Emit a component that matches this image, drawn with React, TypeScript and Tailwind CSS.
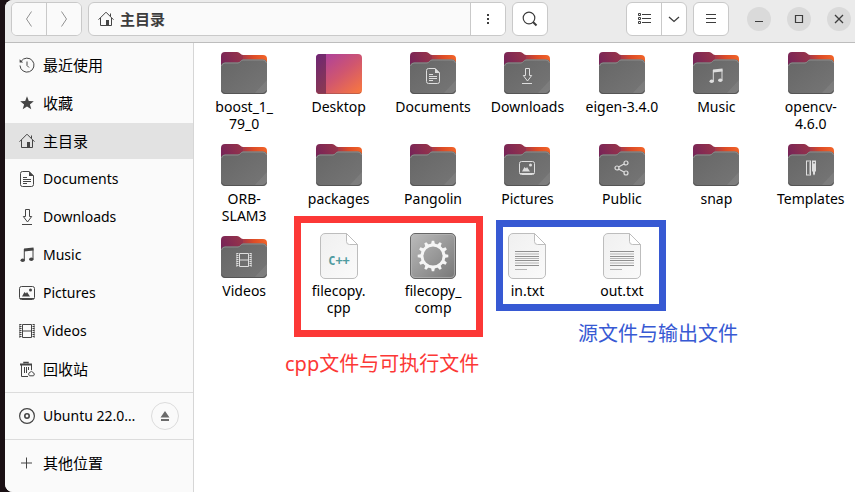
import type { ReactNode } from "react";

type GlyphName =
  | "recent"
  | "star"
  | "home"
  | "documents"
  | "downloads"
  | "music"
  | "pictures"
  | "videos"
  | "trash"
  | "disc"
  | "plus"
  | "share"
  | "templates";

const gear = Array.from({ length: 12 }, (_, i) => i * 30);

const glyphs: Record<GlyphName, ReactNode> = {
  recent: (
    <g fill="none" stroke="currentColor">
      <path d="M2.2 4.2A7 7 0 1 1 1 8.5" />
      <path d="M8 4.5v4l2 2" />
      <path d="M.6 2.2v3.3h3.6z" fill="currentColor" stroke="none" />
    </g>
  ),
  star: (
    <path
      fill="currentColor"
      d="M8 1.3l1.8 4.8 5 .2-3.9 3.1 1.4 4.9L8 11.5l-4.3 2.8 1.4-4.9-3.9-3.1 5-.2z"
    />
  ),
  home: (
    <g fill="none" stroke="currentColor">
      <path d="M.5 8.7L8 1.2l7.5 7.5M2.5 7v7.5h11V7M12.5 2.5v3" />
      <path d="M8 9h3v5.5H8z" fill="currentColor" stroke="none" />
    </g>
  ),
  documents: (
    <g fill="none" stroke="currentColor">
      <path d="M3.5.5H10L14.5 5v8.5a2 2 0 0 1-2 2h-9a2 2 0 0 1-2-2v-11a2 2 0 0 1 2-2z" />
      <path d="M10 0v5h5z" fill="currentColor" stroke="none" />
      <path d="M4 6.5h4M4 8.5h8M4 10.5h8M4 12.5h4" />
    </g>
  ),
  downloads: (
    <path fill="none" stroke="currentColor" d="M6.5.5h4v7h2.2L8.5 13 4.3 7.5h2.2zM3 15.500h10" />
  ),
  music: (
    <g fill="currentColor">
      <path d="M5 1.5L14.5.5v3L5 4.5z" />
      <path d="M4.800 2h1v11h-1zM13.500 1.500h1V12h-1z" />
      <ellipse cx="3.700" cy="13.200" rx="2.200" ry="1.800" />
      <ellipse cx="12.300" cy="12.200" rx="2.200" ry="1.800" />
    </g>
  ),
  pictures: (
    <g fill="none" stroke="currentColor">
      <rect x=".5" y="1.5" width="15" height="13" rx="2" />
      <path d="M1 13.5h14" />
      <path d="M3 11.500l2.500-4.500L7 8.500 8 7l3 4.500z" fill="currentColor" stroke="none" />
      <circle cx="11.5" cy="5" r="1.5" fill="currentColor" stroke="none" />
    </g>
  ),
  videos: (
    <g fill="none" stroke="currentColor">
      <path d="M3.5 1.5h9v13h-9zM3.5 8h9" />
      <path d="M1.5 1v14M14.5 1v14" strokeWidth="2" strokeDasharray="1 1" />
      <path d="M.8 1v14M15.2 1v14" strokeWidth=".7" />
    </g>
  ),
  trash: (
    <g fill="none" stroke="currentColor">
      <path d="M1 3.5h12" strokeWidth="2" />
      <path d="M5 2.5v-1h4v1" strokeWidth="1.500" />
      <path d="M2.5 4v11.5H9M12.5 4v5M5.5 6v6M7.5 6v6M9.5 6v3" />
      <path d="M10.5 14.8a2 2 0 0 1 .5-3.500l1.500-1 1.500 1.200a1.900 1.900 0 0 1 .5 3.300z" />
    </g>
  ),
  disc: (
    <g fill="none" stroke="currentColor">
      <circle cx="8" cy="8" r="7.4" strokeWidth="1.200" />
      <circle cx="8" cy="8" r="2.2" strokeWidth="1.600" />
    </g>
  ),
  plus: <path stroke="currentColor" d="M7.5 2.5v11M2 8h11" />,
  share: (
    <g fill="none" stroke="currentColor" strokeWidth="1.200">
      <path d="M4.500 7l5.500-3M4.500 9l5.500 3" />
      <circle cx="3" cy="8" r="2" />
      <circle cx="12" cy="3" r="2" />
      <circle cx="12" cy="13" r="2" />
    </g>
  ),
  templates: (
    <g fill="currentColor" fillRule="evenodd">
      <path d="M3 .500h5v15H3zM4 1.500v13h3v-1H6v-1h1v-1H6v-1h1v-1H6v-1h1v-1H6v-1h1v-1H6v-1h1v-1H6v-1h1v-1z" />
      <path d="M9 .500h4v10.500l-1 1v2l-1 1.500-1-1.500v-2l-1-1zM10.300 2v1.500h1.500V2z" />
    </g>
  ),
};

function Glyph({ name }: { name: GlyphName }) {
  return (
    <svg viewBox="0 0 16 16" className="size-4 shrink-0 text-[#454545]" aria-hidden="true">
      {glyphs[name]}
    </svg>
  );
}

function Folder({ glyph }: { glyph?: GlyphName }) {
  return (
    <svg viewBox="0 0 46 42" className="mb-1 h-[42px] w-[46px]" aria-hidden="true">
      <defs>
        <linearGradient id="folder-back" x1="0" y1="0.6" x2="1" y2="0.4">
          <stop offset="0" stopColor="#7b2757" />
          <stop offset="0.4" stopColor="#a5374a" />
          <stop offset="0.7" stopColor="#dc4b27" />
          <stop offset="1" stopColor="#ef6128" />
        </linearGradient>
        <linearGradient id="folder-tab" gradientUnits="userSpaceOnUse" x1="0" y1="10" x2="20" y2="0">
          <stop offset="0" stopColor="#762458" />
          <stop offset="1" stopColor="#98344a" />
        </linearGradient>
        <linearGradient id="folder-front" x1="0" y1="0" x2="1" y2="1">
          <stop offset="0" stopColor="#666" />
          <stop offset="1" stopColor="#767676" />
        </linearGradient>
      </defs>
      <path d="M10 3h32a4 4 0 0 1 4 4v20H10z" fill="url(#folder-back)" />
      <path d="M0 24V4a4 4 0 0 1 4-4h12c3 0 3.500 3 6 3v4l-6 17z" fill="url(#folder-tab)" />
      <path
        d="M0 14a4 4 0 0 1 4-3.500h13c2 0 3-3 5-3h20a4 4 0 0 1 4 4V38a4 4 0 0 1-4 4H4a4 4 0 0 1-4-4z"
        fill="url(#folder-front)"
      />
      <path d="M.5 14a4 4 0 0 1 3.500-3h13c2 0 3-3 5-3h20a4 4 0 0 1 3.500 3" fill="none" stroke="#8b8b8b" />
      <path d="M46 28v10a4 4 0 0 1-4 4H33z" fill="#fff" opacity=".07" />
      <path d="M.5 38.500a4 4 0 0 0 3.500 3h38a4 4 0 0 0 3.500-3" fill="none" stroke="#555" />
      {glyph && (
        <g transform="translate(15 16)" color="#dedede">
          {glyphs[glyph]}
        </g>
      )}
    </svg>
  );
}

function DesktopIcon() {
  return (
    <svg viewBox="0 0 46 40" className="mb-1 h-10 w-[46px]" aria-hidden="true">
      <defs>
        <linearGradient id="desk" x1="0.1" y1="0" x2="1" y2="1">
          <stop offset="0" stopColor="#aa3fa0" />
          <stop offset="0.5" stopColor="#d0566f" />
          <stop offset="1" stopColor="#fb7a3c" />
        </linearGradient>
        <linearGradient id="desk-side" x1="0" y1="0" x2="0.3" y2="1">
          <stop offset="0" stopColor="#6e2674" />
          <stop offset="1" stopColor="#883755" />
        </linearGradient>
      </defs>
      <rect width="46" height="40" rx="4" fill="url(#desk)" />
      <path d="M10 0H4a4 4 0 0 0-4 4v32a4 4 0 0 0 4 4h6z" fill="url(#desk-side)" />
      <path d="M1 38a4 4 0 0 0 3 1.500h38a4 4 0 0 0 3-1.500" fill="none" stroke="#8f4a4a" opacity=".5" />
    </svg>
  );
}

function Sheet({ children }: { children: ReactNode }) {
  return (
    <svg viewBox="0 0 38 46" className="mb-[3px] h-[46px] w-[38px]" aria-hidden="true">
      <defs>
        <linearGradient id="sheet" x1="0" y1="0" x2="1" y2="1">
          <stop offset="0" stopColor="#f0f0f0" />
          <stop offset="1" stopColor="#fafafa" />
        </linearGradient>
      </defs>
      <path
        d="M5 .5h21.500l11 11V41a4.500 4.500 0 0 1-4.500 4.500H5A4.500 4.500 0 0 1 .5 41V5A4.500 4.500 0 0 1 5 .5z"
        fill="url(#sheet)"
        stroke="#bdbdbd"
      />
      <path d="M26.500.5v8a3 3 0 0 0 3 3h8z" fill="#fff" stroke="#bdbdbd" />
      {children}
    </svg>
  );
}

function TextFile() {
  return (
    <Sheet>
      <path d="M7 18.500h24M7 23.500h24M7 27.500h24M7 32.500h24" stroke="#8f8f8f" />
      <path d="M7 21h24M7 25.500h24M7 30h24M7 36.500h12" stroke="#b4b4b4" />
    </Sheet>
  );
}

function CppFile() {
  return (
    <Sheet>
      <text
        x="19"
        y="32"
        textAnchor="middle"
        fill="#4f9ba0"
        className="font-['DejaVu_Sans_Mono',monospace] text-[12px] font-bold"
      >
        C++
      </text>
    </Sheet>
  );
}

function Executable() {
  return (
    <svg viewBox="0 0 46 46" className="mb-[3px] size-[46px]" aria-hidden="true">
      <defs>
        <linearGradient id="exec" x1="0" y1="0" x2="1" y2="1">
          <stop offset="0" stopColor="#bcbcbc" />
          <stop offset="1" stopColor="#777" />
        </linearGradient>
      </defs>
      <rect x=".5" y=".5" width="45" height="45" rx="4.500" fill="url(#exec)" stroke="#666" />
      <rect x="1.500" y="1.500" width="43" height="43" rx="3.500" fill="none" stroke="#bbb" opacity=".6" />
      <circle cx="23" cy="23" r="11" fill="none" stroke="#f5f5f5" strokeWidth="2.800" />
      {gear.map((a) => (
        <path key={a} d="M20.900 12l.9-4.300h2.400l.9 4.300z" fill="#f5f5f5" transform={`rotate(${a} 23 23)`} />
      ))}
    </svg>
  );
}

const places: { label: string; glyph: GlyphName; cjk?: boolean; active?: boolean }[] = [
  { label: "最近使用", glyph: "recent", cjk: true },
  { label: "收藏", glyph: "star", cjk: true },
  { label: "主目录", glyph: "home", cjk: true, active: true },
  { label: "Documents", glyph: "documents" },
  { label: "Downloads", glyph: "downloads" },
  { label: "Music", glyph: "music" },
  { label: "Pictures", glyph: "pictures" },
  { label: "Videos", glyph: "videos" },
  { label: "回收站", glyph: "trash", cjk: true },
];

const files: { label: string; icon: ReactNode }[] = [
  { label: "boost_1_\n79_0", icon: <Folder /> },
  { label: "Desktop", icon: <DesktopIcon /> },
  { label: "Documents", icon: <Folder glyph="documents" /> },
  { label: "Downloads", icon: <Folder glyph="downloads" /> },
  { label: "eigen-3.4.0", icon: <Folder /> },
  { label: "Music", icon: <Folder glyph="music" /> },
  { label: "opencv-\n4.6.0", icon: <Folder /> },
  { label: "ORB-\nSLAM3", icon: <Folder /> },
  { label: "packages", icon: <Folder /> },
  { label: "Pangolin", icon: <Folder /> },
  { label: "Pictures", icon: <Folder glyph="pictures" /> },
  { label: "Public", icon: <Folder glyph="share" /> },
  { label: "snap", icon: <Folder /> },
  { label: "Templates", icon: <Folder glyph="templates" /> },
  { label: "Videos", icon: <Folder glyph="videos" /> },
  { label: "filecopy.\ncpp", icon: <CppFile /> },
  { label: "filecopy_\ncomp", icon: <Executable /> },
  { label: "in.txt", icon: <TextFile /> },
  { label: "out.txt", icon: <TextFile /> },
];

const box = "flex h-[34px] shrink-0 overflow-hidden rounded-md border border-[#c9c9c9] bg-white";
const cell = "flex items-center justify-center";

function Header() {
  return (
    <header className="flex items-start border-b border-[#bdbdbd] bg-[#ebebeb] pt-0.5 pr-1 pb-1.5 pl-1.5 text-[#3d3d3d]">
      <div className={box}>
        <button aria-label="后退" className={`${cell} w-[35px] border-r border-[#c9c9c9] bg-[#fafafa]`}>
          <svg viewBox="0 0 16 16" className="size-4" fill="none" stroke="#929292">
            <path d="M10.500.500L5.500 8l5 7.500" />
          </svg>
        </button>
        <button aria-label="前进" className={`${cell} w-[34px] bg-[#fafafa]`}>
          <svg viewBox="0 0 16 16" className="size-4" fill="none" stroke="#929292">
            <path d="M5.500.500l5 7.500-5 7.500" />
          </svg>
        </button>
      </div>
      <div className="ml-1.5 flex h-[34px] min-w-0 flex-1 overflow-hidden rounded-md border border-[#c9c9c9] bg-[#fafafa]">
        <button className="flex flex-1 items-center gap-1.5 pl-[9px] text-[15px] font-bold">
          <Glyph name="home" />
          主目录
        </button>
        <button aria-label="菜单" className={`${cell} w-[35px] border-l border-[#c9c9c9] bg-white`}>
          <svg viewBox="0 0 16 16" className="size-4" fill="currentColor">
            <path d="M7 3h2v2H7zM7 7h2v2H7zM7 11h2v2H7z" />
          </svg>
        </button>
      </div>
      <div className={`${box} mr-[78px] ml-1.5`}>
        <button aria-label="搜索" className={`${cell} w-[34px]`}>
          <svg viewBox="0 0 16 16" className="size-4" fill="none" stroke="currentColor">
            <circle cx="7" cy="7" r="5.800" strokeWidth="1.200" />
            <path d="M11 11l3.500 3.500" strokeWidth="2" />
          </svg>
        </button>
      </div>
      <div className={box}>
        <button aria-label="列表视图" className={`${cell} w-[34px]`}>
          <svg viewBox="0 0 16 16" className="size-4" fill="none" stroke="currentColor">
            <path d="M6 3.500h9M6 7.500h9M6 11.500h9" />
            <path d="M2.500 2.500h2v2h-2zM2.500 6.500h2v2h-2zM2.500 10.500h2v2h-2z" />
          </svg>
        </button>
        <button aria-label="视图选项" className={`${cell} w-[25px] border-l border-[#c9c9c9]`}>
          <svg viewBox="0 0 16 16" className="size-4" fill="none" stroke="currentColor">
            <path d="M3 6l5 4.500L13 6" strokeWidth="1.300" />
          </svg>
        </button>
      </div>
      <div className={`${box} ml-1.5`}>
        <button aria-label="主菜单" className={`${cell} w-[34px]`}>
          <svg viewBox="0 0 16 16" className="size-4" fill="none" stroke="currentColor">
            <path d="M3 3.500h10M3 7.500h10M3 11.500h10" />
          </svg>
        </button>
      </div>
      <div className="ml-[18px] flex h-[34px] items-center gap-4">
        <button aria-label="最小化" className={`${cell} size-6 rounded-full bg-[#dadada]`}>
          <svg viewBox="0 0 16 16" className="size-4" stroke="currentColor">
            <path d="M4 10.500h8" />
          </svg>
        </button>
        <button aria-label="最大化" className={`${cell} size-6 rounded-full bg-[#dadada]`}>
          <svg viewBox="0 0 16 16" className="size-4" fill="none" stroke="currentColor">
            <path d="M4.500 4.500h7v7h-7z" strokeWidth="1.200" />
          </svg>
        </button>
        <button aria-label="关闭" className={`${cell} size-6 rounded-full bg-[#dadada]`}>
          <svg viewBox="0 0 16 16" className="size-4" stroke="currentColor">
            <path d="M4 4l8 8M12 4l-8 8" strokeWidth="1.300" />
          </svg>
        </button>
      </div>
    </header>
  );
}

function Sidebar() {
  return (
    <nav className="flex w-[189px] shrink-0 flex-col border-r border-[#d6d6d6] bg-[#fafafa] pt-1 text-black">
      <div className="flex flex-col gap-0.5 pb-[5px]">
        {places.map((p) => (
          <button
            key={p.label}
            className={`flex h-9 items-center gap-2 pl-3.5 ${p.active ? "bg-[#e2e2e2]" : ""} ${
              p.cjk ? "text-[15px]" : "text-sm"
            }`}
          >
            <Glyph name={p.glyph} />
            {p.label}
          </button>
        ))}
      </div>
      <div className="flex h-12 items-center border-y border-[#dcdcdc] pr-3.5 pl-3.5">
        <button className="flex min-w-0 flex-1 items-center gap-2 text-sm">
          <Glyph name="disc" />
          Ubuntu 22.0…
        </button>
        <button aria-label="弹出" className={`${cell} size-7 rounded-full border border-[#dcdcdc]`}>
          <svg viewBox="0 0 16 16" className="size-4" fill="#6a6a6a">
            <path d="M8 3l4.500 6.500h-9zM4 11h8v2H4z" />
          </svg>
        </button>
      </div>
      <button className="flex h-[46px] items-center gap-2 pl-3.5 text-[15px]">
        <Glyph name="plus" />
        其他位置
      </button>
    </nav>
  );
}

export default function App() {
  return (
    <div className="h-screen overflow-hidden bg-[#1a1014] pl-[5px] font-['Noto_Sans','Noto_Sans_CJK_SC',sans-serif]">
      <div className="flex h-full flex-col overflow-hidden rounded-l-lg bg-white">
        <Header />
        <div className="flex min-h-0 flex-1">
          <Sidebar />
          <main className="relative min-w-0 flex-1 overflow-hidden bg-white">
            <ul className="-mr-[3px] ml-[3px] grid grid-cols-7 gap-y-2.5 pt-[7px]">
              {files.map((f) => (
                <li key={f.label}>
                  <button className="flex w-full flex-col items-center text-sm leading-[17px] text-black">
                    <span className="flex h-12 items-end">{f.icon}</span>
                    <span className="text-center whitespace-pre-line">{f.label}</span>
                  </button>
                </li>
              ))}
            </ul>
            <div className="absolute top-[173px] left-[100px] h-[121px] w-[189px] border-[7px] border-[#fc3836]" />
            <p className="absolute top-[307px] left-[91px] text-xl leading-7 whitespace-nowrap text-[#fc3836]">
              cpp文件与可执行文件
            </p>
            <div className="absolute top-[177px] left-[302px] h-[91px] w-[170px] border-[7px] border-[#3759d3]" />
            <p className="absolute top-[277px] left-[384px] text-xl leading-7 whitespace-nowrap text-[#3759d3]">
              源文件与输出文件
            </p>
          </main>
        </div>
      </div>
    </div>
  );
}
